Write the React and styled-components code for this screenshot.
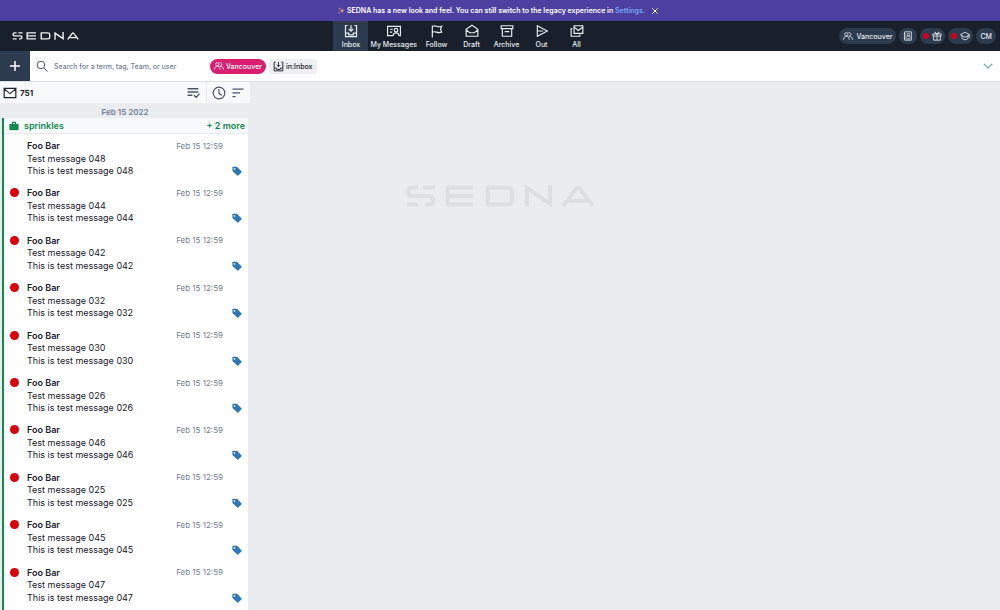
import React from "react";
import styled, { createGlobalStyle } from "styled-components";

const GlobalStyle = createGlobalStyle`
  *, *::before, *::after { box-sizing: border-box; }
  body {
    margin: 0;
    background: #ebecf0;
    color: #1a202c;
    font-family: Inter, "Liberation Sans", sans-serif;
    font-size: 8px;
  }
  button, input { font: inherit; color: inherit; }
  button { border: 0; padding: 0; background: none; cursor: pointer; }
  ul { list-style: none; margin: 0; padding: 0; }
  h2, h3, p { margin: 0; }
`;

const Page = styled.div`
  display: flex;
  flex-direction: column;
  min-height: 100vh;
`;

const Svg = styled.svg`
  display: block;
  flex: none;
  width: ${(p) => p.$size || 14}px;
  height: ${(p) => p.$size || 14}px;
  fill: none;
  stroke: currentColor;
  stroke-width: ${(p) => p.$weight || 2};
`;

const icons = {
  inbox: <path d="M6 2.500H2.500v19h19v-19H18M2.500 15.500H8v3h8v-3h5.500M12 2v10M8 8.500l4 4 4-4" />,
  card: (
    <>
      <path d="M10 20H1V4h22v16h-2M5 9h5M5 14h4" />
      <circle cx="15.500" cy="10.500" r="3" />
      <path d="M10.500 20.500c0-7 10-7 10 0" />
    </>
  ),
  flag: <path d="M4 23V3M4 4c6-3 8 3 16 0l-2 5 2 5c-8 3-10-3-16 0" />,
  draft: <path d="M2 9l10-7 10 7v12H2zM2 10l6 5h8l6-5" />,
  archive: <path d="M2 3h20v5H2zM4 8v13h16V8M8 13h8" />,
  out: <path d="M4 3l17 9-17 9zM4 12h10" />,
  all: <path d="M7 3h15v13H7zM7 5l7 6 8-6M4 8H2v13h15v-3" />,
  people: (
    <>
      <circle cx="8" cy="8" r="4" />
      <path d="M1 21c0-11 14-11 14 0M13 4c7-2 8 8 2 8M14 13c5-1 9 3 9 8" />
    </>
  ),
  contact: (
    <>
      <path d="M4 2h16v20H4zM2 7h4M2 12h4M2 17h4M8 19h9" />
      <circle cx="13" cy="9" r="3" />
      <path d="M8 16c0-5 10-5 10 0" />
    </>
  ),
  gift: <path d="M2 7h20v5H2zM4 12v10h16V12M12 7v15M12 7C3 6 7-1 12 7c5-8 9-1 0 0" />,
  cap: <path d="M12 3L1 9l11 6 11-6zM5 12v6c4 4 10 4 14 0v-6M22 9v8" />,
  plus: <path d="M12 2v20M2 12h20" />,
  search: (
    <>
      <circle cx="10" cy="10" r="7.500" />
      <path d="M15.500 15.500L23 23" />
    </>
  ),
  close: <path d="M4 4l16 16M20 4L4 20" />,
  chevron: <path d="M2 7l10 10L22 7" />,
  envelope: <path d="M2 4h20v16H2zM2 5l10 8 10-8" />,
  select: <path d="M1 5h20M1 11h20M1 17h9M13 17l4 4 6-7" />,
  clock: (
    <>
      <circle cx="12" cy="12" r="10" />
      <path d="M12 5v8l5 3" />
    </>
  ),
  sort: <path d="M1 4h22M1 11.500h15M1 19h6" />,
  briefcase: (
    <g fill="currentColor" stroke="none">
      <path d="M1 7h22v15H1z" />
      <path d="M7 8V2h10v6h-3V5h-4v3z" />
    </g>
  ),
  tag: (
    <path
      fill="currentColor"
      stroke="none"
      fillRule="evenodd"
      d="M1 2h11l11 11q1 1 0 2l-8 8q-1 1-2 0L1 12zM6 5a2 2 0 1 0 0 4 2 2 0 0 0 0-4z"
    />
  ),
};

const Icon = ({ name, size, weight }) => (
  <Svg viewBox="0 0 24 24" $size={size} $weight={weight} aria-hidden="true">
    {icons[name]}
  </Svg>
);

const LogoSvg = styled.svg`
  display: block;
  flex: none;
  width: ${(p) => p.$width}px;
  height: auto;
  fill: none;
  stroke: currentColor;
  stroke-width: 4;
`;

const Logo = ({ width }) => (
  <LogoSvg viewBox="0 0 190 22" $width={width} role="img" aria-label="Sedna">
    <path d="M13 2.500H7Q3 2.500 3 7Q3 11 7 11H24Q28 11 28 15Q28 19.500 24 19.500H20M18 2.500H30M2 19.500H13" />
    <path d="M68 2.500H43V19.500H68M43 11H68" />
    <path d="M83 2.500H102Q107 2.500 107 7V15Q107 19.500 102 19.500H83Z" />
    <path d="M122 22V3L145 19V0" />
    <path d="M158 21L171 4Q173 1.500 175 4L188 21M164 16H182" />
  </LogoSvg>
);

const Banner = styled.div`
  display: flex;
  align-items: center;
  justify-content: center;
  gap: 2px;
  height: 21px;
  padding-right: 3px;
  background: #4c3fa0;
  color: #fff;
  font-size: 7px;
  font-weight: 600;
`;

const Sparkle = styled.svg`
  width: 7px;
  height: 7px;
  fill: #e9a96b;
`;

const BannerLink = styled.a`
  color: #74a9f0;
  text-decoration: none;
`;

const BannerClose = styled.button`
  margin-left: 4px;
`;

const TopBar = styled.header`
  display: flex;
  align-items: center;
  justify-content: space-between;
  height: 30px;
  padding: 0 4px 0 12px;
  background: #1a202b;
  color: #e8edf2;
`;

const LogoLink = styled.a`
  margin-right: 9px;
  color: #f1f3f5;
`;

const Nav = styled.nav`
  display: flex;
  align-self: stretch;
`;

const NavItem = styled.a`
  display: flex;
  flex-direction: column;
  align-items: center;
  gap: 2px;
  min-width: 35px;
  padding: 3px 2px 0;
  background: ${(p) => (p.$active ? "#2d3b4e" : "transparent")};
  color: inherit;
  font-size: 7px;
  font-weight: 500;
  line-height: 9px;
  text-decoration: none;
`;

const Tools = styled.div`
  display: flex;
  gap: 3px;
`;

const Pill = styled.button`
  display: flex;
  align-items: center;
  justify-content: center;
  gap: 3px;
  height: 16px;
  padding: 0 ${(p) => (p.$tight ? 3 : 4)}px;
  border-radius: 8px;
  background: #2d3b4e;
  font-size: 7px;
  font-weight: 500;
`;

const Alert = styled.span`
  width: 6px;
  height: 6px;
  border-radius: 50%;
  background: #d0021b;
`;

const SearchBar = styled.form`
  display: flex;
  align-items: center;
  height: 31px;
  padding-right: 7px;
  border-bottom: 1px solid #dcdfe4;
  background: #fff;
`;

const Compose = styled.button`
  display: grid;
  place-items: center;
  align-self: stretch;
  width: 30px;
  margin-right: 6px;
  background: #2d3b4e;
  color: #fff;
`;

const SearchLabel = styled.label`
  display: flex;
  align-items: center;
  gap: 6px;
  color: #4a5568;
`;

const SearchInput = styled.input`
  width: 156px;
  padding: 0;
  border: 0;
  outline: 0;
  background: none;
  font-size: 7px;
  font-weight: 500;
  &::placeholder { color: #718096; opacity: 1; }
`;

const Chip = styled.button`
  display: flex;
  align-items: center;
  gap: 2px;
  height: 15px;
  margin-right: 3px;
  padding: 0 4px;
  border-radius: ${(p) => (p.$team ? 8 : 2)}px;
  background: ${(p) => (p.$team ? "#d91e70" : "#edeff2")};
  color: ${(p) => (p.$team ? "#fff" : "#1a202c")};
  font-size: 7px;
  font-weight: 500;
`;

const Expand = styled.button`
  margin-left: auto;
  color: #68a99b;
`;

const Body = styled.div`
  display: flex;
  flex: 1;
`;

const Sidebar = styled.aside`
  display: flex;
  flex-direction: column;
  flex: none;
  width: 250px;
`;

const ListTools = styled.div`
  display: flex;
  align-items: center;
  height: 21px;
  padding-left: 3px;
  background: #f7f9fb;
  color: #4a5568;
`;

const Count = styled.div`
  display: flex;
  align-items: center;
  gap: 3px;
  margin-right: auto;
  color: #1a202c;
  font-weight: 700;
`;

const ToolButton = styled.button`
  padding: 0 ${(p) => p.$side || 0}px;
`;

const Divider = styled.span`
  align-self: stretch;
  width: 1px;
  margin-right: 5px;
  background: #e4e7eb;
`;

const DayHeading = styled.h2`
  padding-top: 4px;
  color: #718096;
  font-size: 8px;
  font-weight: 600;
  line-height: 11px;
  text-align: center;
`;

const Group = styled.section`
  display: flex;
  flex-direction: column;
  flex: 1;
  margin: 0 2px;
  border-left: 2px solid #12894f;
  background: #fff;
`;

const GroupHeader = styled.header`
  display: flex;
  align-items: center;
  gap: 5px;
  height: 16px;
  padding: 0 3px 0 5px;
  border-bottom: 1px solid #e6eaee;
  background: #f7f9fb;
  color: #12894f;
`;

const GroupName = styled.h3`
  margin-right: auto;
  font-size: 9px;
  font-weight: 600;
`;

const More = styled.button`
  font-size: 9px;
  font-weight: 600;
`;

const Messages = styled.ul`
  display: grid;
  flex: 1;
  grid-auto-rows: 1fr;
  padding-bottom: 2px;
`;

const Message = styled.li`
  display: grid;
  grid-template-columns: 23px 1fr auto;
  grid-template-rows: 13px 12px 13px;
  align-items: center;
  padding: 5px 6px 4px 0;
  font-size: 9px;
`;

const Unread = styled.span`
  margin-left: 6px;
  width: 9px;
  height: 9px;
  border-radius: 50%;
  background: #d6000f;
`;

const Sender = styled.span`
  grid-column: 2;
  font-weight: 600;
`;

const Stamp = styled.time`
  margin-right: 19px;
  color: #718096;
  font-size: 8px;
`;

const Line = styled.p`
  grid-column: 2;
`;

const Tag = styled.span`
  justify-self: end;
  padding-top: 1px;
  color: #2b77b8;
`;

const Reader = styled.main`
  display: flex;
  align-items: flex-start;
  justify-content: center;
  flex: 1;
  padding: 103px 250px 0 0;
  color: #dddee2;
`;

const folders = [
  ["inbox", "Inbox"],
  ["card", "My Messages"],
  ["flag", "Follow"],
  ["draft", "Draft"],
  ["archive", "Archive"],
  ["out", "Out"],
  ["all", "All"],
];

const messages = ["048", "044", "042", "032", "030", "026", "046", "025", "045", "047"];

export default function App() {
  return (
    <Page>
      <GlobalStyle />
      <Banner>
        <Sparkle viewBox="0 0 24 24" aria-hidden="true">
          <path d="M14 3l2 8 7 2-7 2-2 8-2-8-7-2 7-2zM5 1l1 4 4 1-4 1-1 4-1-4-4-1 4-1zM4 16l1 3 3 1-3 1-1 3-1-3-3-1 3-1z" />
        </Sparkle>
        <span>
          SEDNA has a new look and feel. You can still switch to the legacy experience in{" "}
          <BannerLink href="#settings">Settings.</BannerLink>
        </span>
        <BannerClose aria-label="Dismiss">
          <Icon name="close" size={8} weight={3} />
        </BannerClose>
      </Banner>

      <TopBar>
        <LogoLink href="#home">
          <Logo width={67} />
        </LogoLink>
        <Nav>
          {folders.map(([icon, label], i) => (
            <NavItem href={"#" + icon} key={icon} $active={i === 0}>
              <Icon name={icon} />
              {label}
            </NavItem>
          ))}
        </Nav>
        <Tools>
          <Pill>
            <Icon name="people" size={10} />
            Vancouver
          </Pill>
          <Pill aria-label="Contacts">
            <Icon name="contact" size={10} />
          </Pill>
          <Pill $tight aria-label="What's new">
            <Alert />
            <Icon name="gift" size={10} />
          </Pill>
          <Pill $tight aria-label="Learning">
            <Alert />
            <Icon name="cap" size={10} />
          </Pill>
          <Pill>CM</Pill>
        </Tools>
      </TopBar>

      <SearchBar>
        <Compose type="button" aria-label="Compose">
          <Icon name="plus" size={12} weight={3} />
        </Compose>
        <SearchLabel>
          <Icon name="search" size={12} />
          <SearchInput aria-label="Search" placeholder="Search for a term, tag, Team, or user" />
        </SearchLabel>
        <Chip type="button" $team>
          <Icon name="people" size={10} />
          Vancouver
        </Chip>
        <Chip type="button">
          <Icon name="inbox" size={11} />
          in:Inbox
        </Chip>
        <Expand type="button" aria-label="Expand search">
          <Icon name="chevron" size={10} weight={3} />
        </Expand>
      </SearchBar>

      <Body>
        <Sidebar>
          <ListTools>
            <Count>
              <Icon name="envelope" />
              751
            </Count>
            <ToolButton $side={6} aria-label="Select messages">
              <Icon name="select" size={13} weight={2.5} />
            </ToolButton>
            <Divider />
            <ToolButton aria-label="Snoozed">
              <Icon name="clock" />
            </ToolButton>
            <ToolButton $side={6} aria-label="Sort">
              <Icon name="sort" size={12} weight={2.5} />
            </ToolButton>
          </ListTools>
          <DayHeading>Feb 15 2022</DayHeading>
          <Group>
            <GroupHeader>
              <Icon name="briefcase" size={10} />
              <GroupName>sprinkles</GroupName>
              <More>+ 2 more</More>
            </GroupHeader>
            <Messages>
              {messages.map((id, i) => (
                <Message key={id}>
                  {i > 0 && <Unread role="img" aria-label="Unread" />}
                  <Sender>Foo Bar</Sender>
                  <Stamp>Feb 15 12:59</Stamp>
                  <Line>Test message {id}</Line>
                  <Line>This is test message {id}</Line>
                  <Tag>
                    <Icon name="tag" size={10} />
                  </Tag>
                </Message>
              ))}
            </Messages>
          </Group>
        </Sidebar>
        <Reader>
          <Logo width={190} />
        </Reader>
      </Body>
    </Page>
  );
}
